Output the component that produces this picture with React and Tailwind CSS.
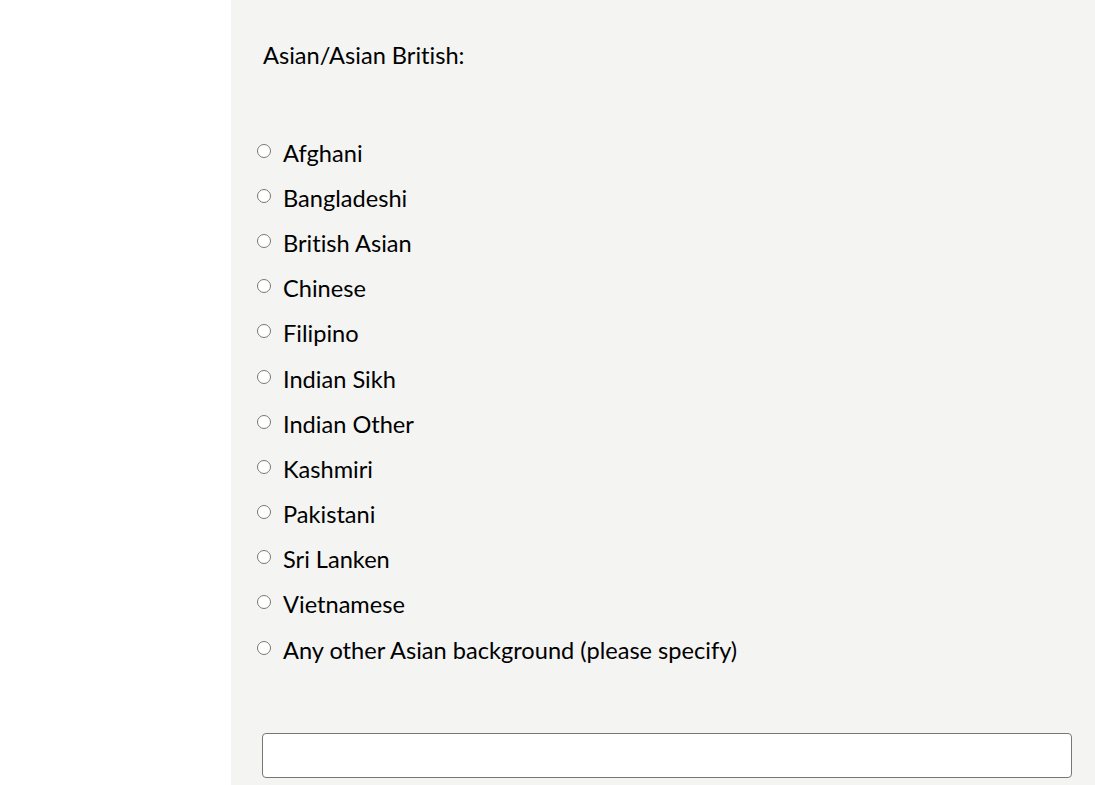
import React from 'react';

const options = [
  'Afghani',
  'Bangladeshi',
  'British Asian',
  'Chinese',
  'Filipino',
  'Indian Sikh',
  'Indian Other',
  'Kashmiri',
  'Pakistani',
  'Sri Lanken',
  'Vietnamese',
  'Any other Asian background (please specify)',
];

const App = () => {
  return (
    <div className="flex min-h-[785px] bg-white font-['Lato',sans-serif] text-[23.6px] text-black [font-variant-ligatures:none]">
      <div className="w-[231px] shrink-0" />
      <div className="flex-1 bg-[#f4f4f3] pr-[23px]">
        <p className="pl-[32px] pt-[40px] leading-[30px]">Asian/Asian British:</p>

        <div className="mt-[60px] pl-[26px]">
          {options.map((opt) => (
            <label key={opt} className="flex h-[45.2px] items-center">
              <input type="radio" name="asian" className="m-0 h-[14px] w-[14px] -translate-y-[2px]" />
              <span className="ml-[12px] leading-[30px]">{opt}</span>
            </label>
          ))}
        </div>

        <div className="mt-[61px] pl-[31px]">
          <input
            type="text"
            className="block h-[45px] w-full rounded-[4px] border border-[#767676] bg-white"
          />
        </div>
      </div>
    </div>
  );
};

export default App;
